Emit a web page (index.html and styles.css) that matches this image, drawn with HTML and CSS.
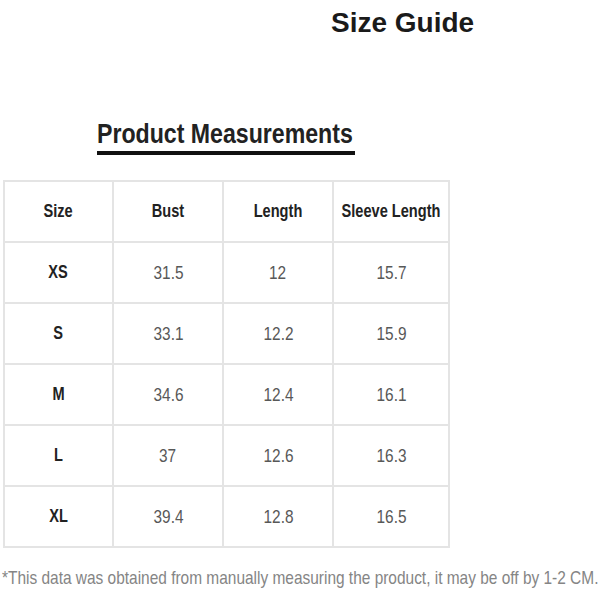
FILE: index.html
```html
<!DOCTYPE html>
<html>
<head>
<meta charset="utf-8">
<link rel="stylesheet" href="styles.css">
</head>
<body>
<div class="page">
  <header class="top">
    <h1 class="title">Size Guide</h1>
  </header>
  <section class="section">
    <h2 class="subtitle"><span class="narrow sub-text">Product Measurements</span></h2>
  </section>
  <table class="sizes">
    <tr class="head"><th><span class="narrow">Size</span></th><th><span class="narrow">Bust</span></th><th><span class="narrow">Length</span></th><th><span class="narrow">Sleeve Length</span></th></tr>
    <tr><th><span class="narrow">XS</span></th><td><span class="narrow">31.5</span></td><td><span class="narrow">12</span></td><td><span class="narrow">15.7</span></td></tr>
    <tr><th><span class="narrow">S</span></th><td><span class="narrow">33.1</span></td><td><span class="narrow">12.2</span></td><td><span class="narrow">15.9</span></td></tr>
    <tr><th><span class="narrow">M</span></th><td><span class="narrow">34.6</span></td><td><span class="narrow">12.4</span></td><td><span class="narrow">16.1</span></td></tr>
    <tr><th><span class="narrow">L</span></th><td><span class="narrow">37</span></td><td><span class="narrow">12.6</span></td><td><span class="narrow">16.3</span></td></tr>
    <tr><th><span class="narrow">XL</span></th><td><span class="narrow">39.4</span></td><td><span class="narrow">12.8</span></td><td><span class="narrow">16.5</span></td></tr>
  </table>
  <p class="note"><span class="note-text">*This data was obtained from manually measuring the product, it may be off by 1-2 CM.</span></p>
</div>
</body>
</html>
```
FILE: styles.css
```css
html, body {
  margin: 0;
  padding: 0;
  background: #ffffff;
}
.page {
  width: 600px;
  height: 600px;
  font-family: "Liberation Sans", Arial, sans-serif;
  overflow: hidden;
}
.narrow {
  display: inline-block;
  white-space: nowrap;
  margin: 0 -40px;
  transform: scaleX(0.81);
}
.top {
  padding: 5px 0 0 331px;
  height: 45px;
}
.title {
  margin: 0;
  font-size: 28px;
  line-height: 36px;
  font-weight: bold;
  color: #1a1a1a;
}
.section {
  padding: 69px 0 0 97px;
  height: 61px;
}
.subtitle {
  margin: 0;
  display: inline-block;
  width: 258px;
  font-size: 28px;
  line-height: 30px;
  font-weight: bold;
  color: #222;
  padding-bottom: 2px;
  border-bottom: 4px solid #111;
}
.sub-text {
  margin: 0;
  transform: scaleX(0.826);
  transform-origin: left center;
}
.sizes {
  margin-left: 3px;
  width: 446px;
  border-collapse: collapse;
  table-layout: fixed;
}
.sizes th, .sizes td {
  border: 2px solid #e4e4e4;
  height: 59px;
  padding: 0;
  text-align: center;
  vertical-align: middle;
  font-size: 19px;
}
.sizes th {
  font-weight: bold;
  color: #222;
  font-size: 18px;
}
.sizes td {
  color: #585858;
}
.sizes tr > :nth-child(1) { width: 107px; }
.sizes tr > :nth-child(2) { width: 108px; }
.sizes tr > :nth-child(3) { width: 108px; }
.sizes tr > :nth-child(4) { width: 114px; }
.note {
  margin: 19px 0 0 2px;
  font-size: 19px;
  line-height: 22px;
  color: #858585;
  white-space: nowrap;
}
.note-text {
  display: inline-block;
  transform: scaleX(0.813);
  transform-origin: left center;
}
```
